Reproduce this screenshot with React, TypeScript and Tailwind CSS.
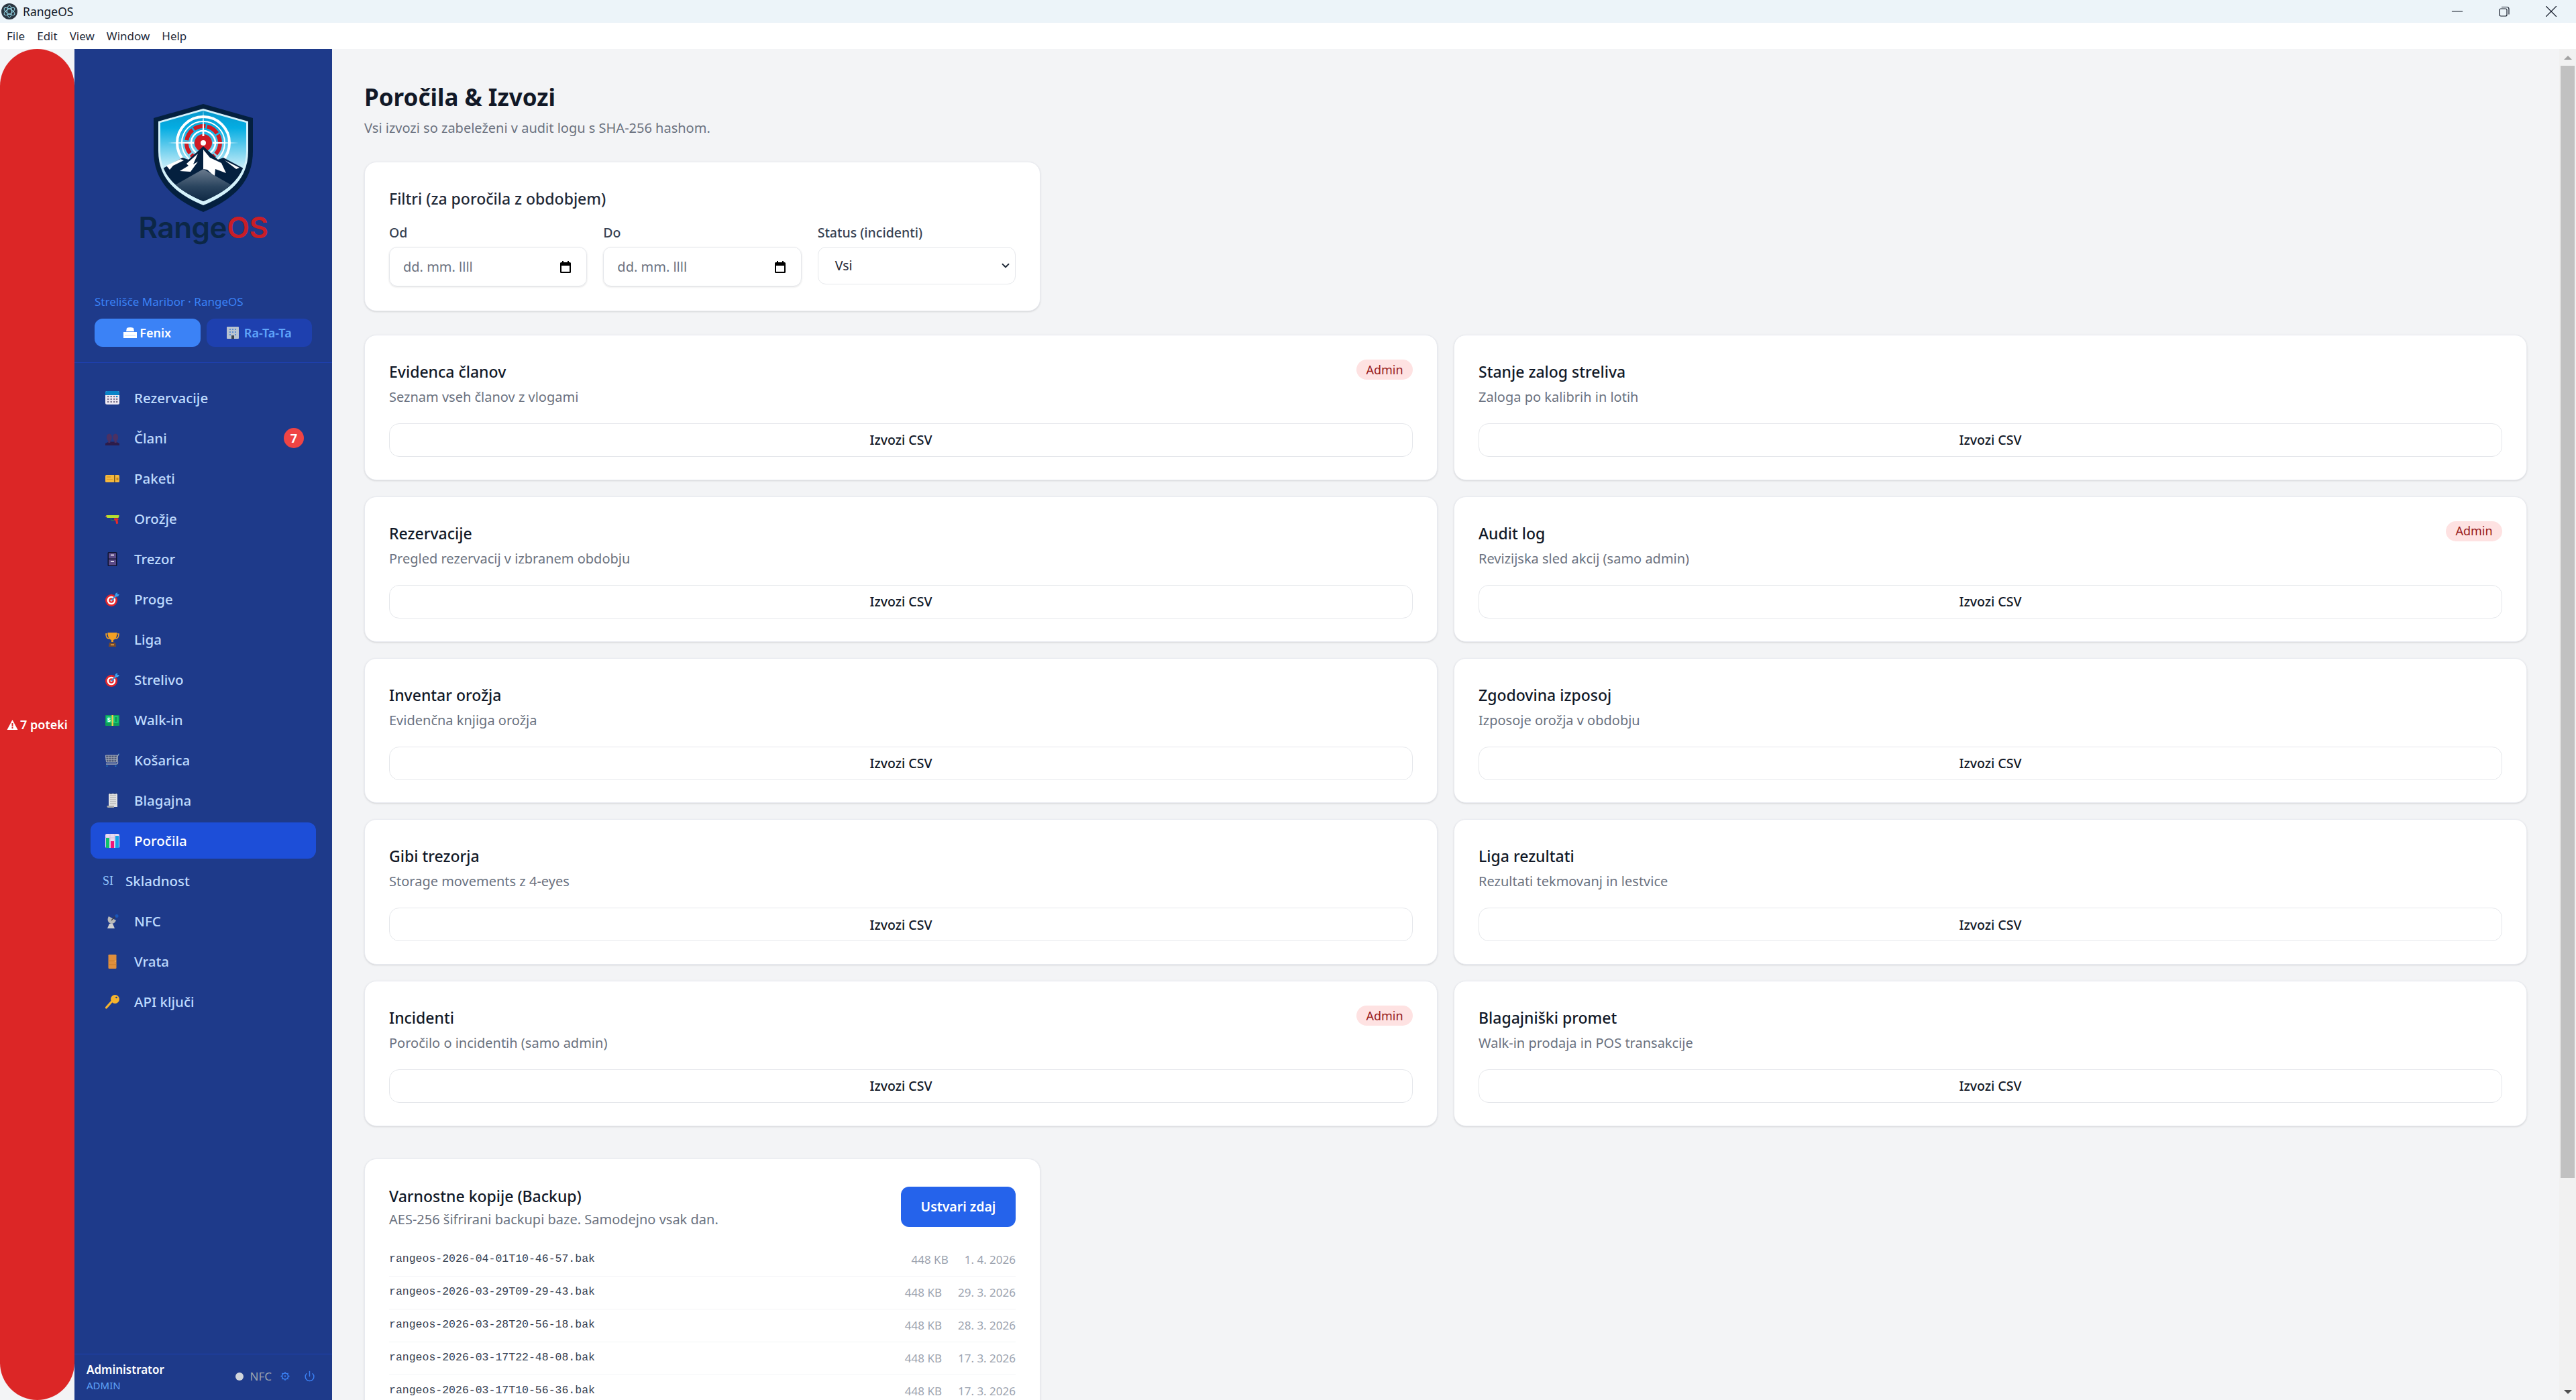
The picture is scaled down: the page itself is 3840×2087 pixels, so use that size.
import React from 'react';
import { Minus, X, ChevronDown, Power } from 'lucide-react';

const Cal = () => (
    <svg viewBox="0 0 21 21" className="w-[21px] h-[21px]">
        <rect x="0" y="0" width="21" height="20" rx="2.5" fill="#efeaf3" />
        <path d="M0 6V2.5A2.5 2.5 0 0 1 2.5 0h16A2.5 2.5 0 0 1 21 2.5V6z" fill="#0a84c8" />
        {[4, 8.5, 13, 17].map(x => [8, 12, 16].map(y => (
            <rect key={`${x}-${y}`} x={x - 1} y={y - 1} width="2.4" height="2.2" fill={x === 17 && y === 8 ? '#0a84c8' : '#7d7590'} />
        )))}
    </svg>
);
const Members = () => (
    <svg viewBox="0 0 21 21" className="w-[21px] h-[21px]">
        <path d="M0 21v-3l5-2.5h11l5 2.5v3z" fill="#2c1c4a" />
        <ellipse cx="5.8" cy="9" rx="4" ry="5.5" fill="#4b3163" />
        <ellipse cx="15.2" cy="9" rx="4" ry="5.5" fill="#4b3163" />
        <rect x="4.3" y="13" width="3" height="4" fill="#4b3163" />
        <rect x="13.7" y="13" width="3" height="4" fill="#4b3163" />
    </svg>
);
const Ticket = () => (
    <svg viewBox="0 0 21 21" className="w-[21px] h-[21px]">
        <rect x="0" y="5" width="21" height="11" rx="1.5" fill="#f5b83d" />
        <rect x="2" y="7.5" width="6" height="1" fill="#c98a1e" />
        <rect x="2" y="11" width="9" height="1" fill="#e09d2a" />
        <rect x="13" y="5" width="1.6" height="11" fill="#7a5a1d" />
        <rect x="16.5" y="9" width="3" height="4" fill="#c98a1e" />
    </svg>
);
const Pistol = () => (
    <svg viewBox="0 0 21 21" className="w-[21px] h-[21px]">
        <path d="M0 6.500l1.500-.8V5h19v2l-1 2H3z" fill="#b6e02e" />
        <path d="M0 6.500L2 5v3z" fill="#e2603c" />
        <path d="M13 9.500h6l.8 2-1.400.5 .8 5.500-3 .5-1-5-2-.5z" fill="#e52b2b" />
        <path d="M8 9.500l1 3h4" stroke="#2e8b3c" strokeWidth="1" fill="none" />
    </svg>
);
const Cabinet = () => (
    <svg viewBox="0 0 21 21" className="w-[21px] h-[21px]">
        <rect x="3.500" y="0" width="14" height="21" rx="1.500" fill="#0f1230" />
        <rect x="5" y="1.500" width="11" height="8" fill="#5b4a87" />
        <rect x="5" y="11" width="11" height="8.500" fill="#5b4a87" />
        <rect x="8" y="3.500" width="5" height="2" fill="#d8d2e6" />
        <rect x="8" y="13" width="5" height="2" fill="#d8d2e6" />
    </svg>
);
const Dart = () => (
    <svg viewBox="0 0 21 21" className="w-[21px] h-[21px]">
        <circle cx="9" cy="12" r="9" fill="#e5252b" />
        <circle cx="9" cy="12" r="6.300" fill="#fff" />
        <circle cx="9" cy="12" r="3.800" fill="#e5252b" />
        <circle cx="9" cy="12" r="1.500" fill="#fff" />
        <path d="M9 12l8-8" stroke="#2f8fd8" strokeWidth="2" />
        <path d="M14 7l1-5 3-2v3h3l-2 3-5 1z" fill="#3aa0ec" />
    </svg>
);
const Trophy = () => (
    <svg viewBox="0 0 21 21" className="w-[21px] h-[21px]">
        <path d="M3 2H1c0 5 2 7 5 7M18 2h2c0 5-2 7-5 7" stroke="#f2a024" strokeWidth="1.500" fill="none" />
        <path d="M3.500 0h14c0 6-2 10-5.500 11v3h-3v-3C5.500 10 3.500 6 3.500 0z" fill="#f2a024" />
        <path d="M5 21l1-6h9l1 6z" fill="#7a4a28" />
        <rect x="8" y="17.500" width="5" height="1.500" fill="#f2b04a" />
    </svg>
);
const Cash = () => (
    <svg viewBox="0 0 21 21" className="w-[21px] h-[21px]">
        <rect x="0" y="3" width="21" height="16" rx="1" fill="#0f9d58" />
        <rect x="1.500" y="4.500" width="18" height="10" fill="#19d27c" />
        <rect x="9.500" y="3" width="2.500" height="16" fill="#f2c94c" />
        <rect x="14" y="6" width="4" height="7" fill="#0f9d58" />
        <text x="2.800" y="13" fontSize="9" fontWeight="700" fill="#fff" fontFamily="'Liberation Sans',sans-serif">$</text>
    </svg>
);
const Cart = () => (
    <svg viewBox="0 0 21 21" className="w-[21px] h-[21px]" fill="none">
        <path d="M0.500 3h17l-1 10H1.500z" fill="#4f5a78" stroke="#aab0bd" />
        <path d="M0.500 6.500h17M0.500 9.500h16.500M5 3v10M9 3v10M13 3v10" stroke="#aab0bd" strokeWidth=".8" />
        <path d="M1 16h15c2 0 3-1 2.500-3L18 5l2-4" stroke="#a5acb8" strokeWidth="1.300" />
        <circle cx="2.500" cy="19" r="1" fill="#1f7cc4" />
        <circle cx="15.500" cy="19" r="1" fill="#1f7cc4" />
        <path d="M20 0l1 .5-.5 2-1-.5z" fill="#1f7cc4" />
    </svg>
);
const Receipt = () => (
    <svg viewBox="0 0 21 21" className="w-[21px] h-[21px]">
        <path d="M5 0h13v20H5z" fill="#e3e3e3" />
        <path d="M3 18h10v3H4a2 2 0 0 1-1-3z" fill="#a9a9a9" />
        <path d="M7 3h9M7 6h9M7 9h9M7 12h9M7 15h9" stroke="#a5a5a5" strokeWidth="1" />
        <path d="M5 .5h13" stroke="#666" strokeWidth="1" strokeDasharray="1 1" />
    </svg>
);
const Chart = () => (
    <svg viewBox="0 0 21 21" className="w-[21px] h-[21px]">
        <rect x="0" y="0" width="21" height="21" rx="2" fill="#e7daf0" />
        <path d="M7 0v21M14 0v21M0 6h21" stroke="#cdbbdc" strokeWidth=".8" />
        <rect x="1" y="6" width="5" height="15" fill="#0fc36b" />
        <rect x="8" y="11" width="5" height="10" fill="#f0147a" />
        <rect x="15" y="3" width="5" height="18" fill="#12a3e8" />
    </svg>
);
const Dish = () => (
    <svg viewBox="0 0 21 21" className="w-[21px] h-[21px]">
        <path d="M5 3c-3 5-1 10 4 11 3 0 6-2 7-5z" fill="#b9b9b9" />
        <path d="M9 9l6-6" stroke="#3f3f3f" strokeWidth="1.200" />
        <circle cx="17" cy="2.500" r="2.500" fill="#1a56b8" />
        <path d="M3 21l3-7h5l3 7z" fill="#d0d0d0" />
    </svg>
);
const Door = () => (
    <svg viewBox="0 0 21 21" className="w-[21px] h-[21px]">
        <rect x="4.500" y="0" width="12" height="21" rx="1.200" fill="#e08f3c" />
        <path d="M4.500 9.500h12M4.500 15h12" stroke="#c67a2b" strokeWidth="1" />
        <rect x="14" y="9" width="1.500" height="1.500" fill="#f7c56b" />
    </svg>
);
const KeyIcon = () => (
    <svg viewBox="0 0 21 21" className="w-[21px] h-[21px]">
        <path d="M1.500 19L10 9.500" stroke="#f7b42c" strokeWidth="3.200" strokeLinecap="round" />
        <circle cx="14.500" cy="6.500" r="6.500" fill="#f7b42c" />
        <circle cx="16.500" cy="4" r="1.300" fill="#1e3a8a" />
    </svg>
);

const navItems: { label: string; icon: React.ReactNode; badge?: string; active?: boolean }[] = [
    { label: 'Rezervacije', icon: <Cal /> },
    { label: 'Člani', icon: <Members />, badge: '7' },
    { label: 'Paketi', icon: <Ticket /> },
    { label: 'Orožje', icon: <Pistol /> },
    { label: 'Trezor', icon: <Cabinet /> },
    { label: 'Proge', icon: <Dart /> },
    { label: 'Liga', icon: <Trophy /> },
    { label: 'Strelivo', icon: <Dart /> },
    { label: 'Walk-in', icon: <Cash /> },
    { label: 'Košarica', icon: <Cart /> },
    { label: 'Blagajna', icon: <Receipt /> },
    { label: 'Poročila', icon: <Chart />, active: true },
    { label: 'Skladnost', icon: null },
    { label: 'NFC', icon: <Dish /> },
    { label: 'Vrata', icon: <Door /> },
    { label: 'API ključi', icon: <KeyIcon /> },
];

const reports: { title: string; desc: string; admin?: boolean }[] = [
    { title: 'Evidenca članov', desc: 'Seznam vseh članov z vlogami', admin: true },
    { title: 'Stanje zalog streliva', desc: 'Zaloga po kalibrih in lotih' },
    { title: 'Rezervacije', desc: 'Pregled rezervacij v izbranem obdobju' },
    { title: 'Audit log', desc: 'Revizijska sled akcij (samo admin)', admin: true },
    { title: 'Inventar orožja', desc: 'Evidenčna knjiga orožja' },
    { title: 'Zgodovina izposoj', desc: 'Izposoje orožja v obdobju' },
    { title: 'Gibi trezorja', desc: 'Storage movements z 4-eyes' },
    { title: 'Liga rezultati', desc: 'Rezultati tekmovanj in lestvice' },
    { title: 'Incidenti', desc: 'Poročilo o incidentih (samo admin)', admin: true },
    { title: 'Blagajniški promet', desc: 'Walk-in prodaja in POS transakcije' },
];

const backups = [
    ['rangeos-2026-04-01T10-46-57.bak', '1. 4. 2026'],
    ['rangeos-2026-03-29T09-29-43.bak', '29. 3. 2026'],
    ['rangeos-2026-03-28T20-56-18.bak', '28. 3. 2026'],
    ['rangeos-2026-03-17T22-48-08.bak', '17. 3. 2026'],
    ['rangeos-2026-03-17T10-56-36.bak', '17. 3. 2026'],
];

const Logo = () => (
    <svg viewBox="0 0 148 161" className="w-[148px] h-[161px]">
        <defs>
            <linearGradient id="sky" x1="0" y1="0" x2="0" y2="1">
                <stop offset="0" stopColor="#0b8fc4" />
                <stop offset="0.22" stopColor="#04ade2" />
                <stop offset="0.42" stopColor="#6fd0ee" />
                <stop offset="0.62" stopColor="#d8f2fa" />
            </linearGradient>
            <linearGradient id="rock" x1="0" y1="0" x2="0" y2="1">
                <stop offset="0" stopColor="#6a7b8e" />
                <stop offset="0.5" stopColor="#2a445e" />
                <stop offset="1" stopColor="#08223e" />
            </linearGradient>
            <clipPath id="inner">
                <path d="M74 10L138 28V70C138 103 118 127 74 145C30 127 10 103 10 70V28Z" />
            </clipPath>
        </defs>
        <path d="M74 0L148 21V70C148 112 124 140 74 161C24 140 0 112 0 70V21Z" fill="#04203f" />
        <path d="M74 7L141 26V70C141 107 120 132 74 151C28 132 7 107 7 70V26Z" fill="#d4f2fb" />
        <g clipPath="url(#inner)">
            <rect x="0" y="0" width="148" height="161" fill="url(#sky)" />
            <circle cx="74" cy="58" r="39" fill="none" stroke="#fff" strokeWidth="4" />
            <circle cx="74" cy="58" r="32" fill="none" stroke="#fff" strokeWidth="2" />
            <circle cx="74" cy="58" r="25" fill="none" stroke="#cf1b24" strokeWidth="6" strokeDasharray="18 2.500" />
            <circle cx="74" cy="58" r="13" fill="#cf1b24" />
            <circle cx="74" cy="58" r="18" fill="none" stroke="#fff" strokeWidth="2.500" />
            <circle cx="74" cy="58" r="4" fill="#fff" />
            <path d="M74 6L75.500 48H72.500Z M21 58L60 56.600V59.400Z M127 58L88 56.600V59.400Z" fill="#fff" />
            <path d="M14 96L43 80L52 83L74 63L96 83L104 80L134 96V150H14Z" fill="#04203f" />
            <path d="M74 68L84 80L101 88L108 103L92 97L91 108L80 98L74 97Z" fill="#fff" />
            <path d="M66 74L59 90L66 86L55 101L39 100L52 92L49 89Z M19 92L40 82L45 84L29 92L24 98Z M106 84L128 95L123 97Z" fill="#fff" />
            <path d="M30 122L74 97L118 122V150H30Z" fill="url(#rock)" />
        </g>
    </svg>
);

const Gear = () => (
    <svg viewBox="0 0 16 16" className="w-[14px] h-[15px]" fill="none" stroke="#3b82f6">
        <circle cx="8" cy="8" r="5.200" strokeWidth="1.800" />
        <circle cx="8" cy="8" r="1.300" fill="#3b82f6" stroke="none" />
        <path d="M8 .5v2M8 13.500v2M.5 8h2M13.500 8h2M2.700 2.700l1.400 1.400M11.900 11.900l1.400 1.400M13.300 2.700l-1.400 1.400M4.100 11.900l-1.400 1.400" strokeWidth="1.500" />
    </svg>
);

const CalendarGlyph = () => (
    <svg viewBox="0 0 16 18" className="w-[16px] h-[18px]">
        <path d="M3 0h2v2h6V0h2v2h1.500A1.500 1.500 0 0 1 16 3.500v13a1.500 1.500 0 0 1-1.500 1.500h-13A1.500 1.500 0 0 1 0 16.500v-13A1.500 1.500 0 0 1 1.500 2H3zM2 7v9h12V7z" fill="#000" />
    </svg>
);

const DateField = ({ label }: { label: string }) => (
    <div>
        <label className="block text-[19.5px] leading-[30px] font-medium text-[#374151] mb-[6px]">{label}</label>
        <div className="h-[59px] pl-[20px] pr-[23px] rounded-[12px] border border-[#e5e7eb] shadow-sm flex items-center justify-between">
            <span className="text-[20px] text-[#6b7280]">dd. mm. llll</span>
            <CalendarGlyph />
        </div>
    </div>
);

const ReportCard = ({ title, desc, admin }: { title: string; desc: string; admin?: boolean }) => (
    <div className="bg-white rounded-[18px] border border-[#e8eaf0] shadow-sm p-[36px] h-[216.75px]">
        <div className="flex items-start justify-between h-[95px]">
            <div>
                <h3 className="text-[23px] leading-[36px] font-medium text-[#111827]">{title}</h3>
                <p className="mt-[4px] text-[20px] leading-[32px] text-[#6b7280]">{desc}</p>
            </div>
            {admin && (
                <span className="h-[30px] w-[84px] flex items-center justify-center rounded-full bg-[#fee2e2] text-[#991b1b] text-[18px]">Admin</span>
            )}
        </div>
        <button className="w-full h-[50px] rounded-[15px] border border-[#e5e7eb] text-[19.5px] font-medium text-[#111827]">Izvozi CSV</button>
    </div>
);

export default function App() {
    return (
        <div className="h-[2087px] flex flex-col overflow-hidden bg-[#f3f4f6] font-['Noto_Sans',sans-serif]">
            {/* window chrome */}
            <div className="h-[34px] shrink-0 bg-[#ecf4f9] flex items-center justify-between">
                <div className="flex items-center gap-[8px] pl-[2px]">
                    <svg viewBox="0 0 24 24" className="w-[24px] h-[24px]" fill="none">
                        <circle cx="12" cy="12" r="12" fill="#2b3540" />
                        <g stroke="#9feaf9" strokeWidth=".9">
                            <ellipse cx="12" cy="12" rx="9" ry="3.500" transform="rotate(30 12 12)" />
                            <ellipse cx="12" cy="12" rx="9" ry="3.500" transform="rotate(90 12 12)" />
                            <ellipse cx="12" cy="12" rx="9" ry="3.500" transform="rotate(150 12 12)" />
                        </g>
                    </svg>
                    <span className="text-[17.5px] text-[#111827]">RangeOS</span>
                </div>
                <div className="flex items-center pr-[2px] text-[#111827]">
                    <div className="w-[70px] flex justify-center"><Minus size={26} strokeWidth={1.1} /></div>
                    <div className="w-[70px] flex justify-center">
                        <svg viewBox="0 0 16 16" className="w-[16px] h-[16px]" fill="none" stroke="currentColor" strokeWidth="1.200">
                            <rect x="1" y="4" width="11" height="11" rx="2" />
                            <path d="M4 1.500h8A3 3 0 0 1 15 4.500v8" />
                        </svg>
                    </div>
                    <div className="w-[70px] flex justify-center"><X size={30} strokeWidth={0.9} /></div>
                </div>
            </div>
            <div className="h-[39px] shrink-0 bg-white flex items-center gap-[18px] pl-[10px] text-[17px] text-[#1f2937]">
                <span>File</span><span>Edit</span><span>View</span><span>Window</span><span>Help</span>
            </div>

            <div className="flex-1 flex min-h-0">
                {/* expiry strip */}
                <div className="w-[111px] shrink-0 rounded-full bg-[#dc2626] flex items-center justify-center gap-[3px] text-white text-[18px] font-semibold">
                    <svg viewBox="0 0 16 15" className="w-[17px] h-[15px]">
                        <path d="M8 0l8 15H0zM7 5v5h2V5zm0 6v2h2v-2z" fill="#fff" fillRule="evenodd" />
                    </svg>
                    <span>7 poteki</span>
                </div>

                {/* sidebar */}
                <aside className="w-[384px] shrink-0 bg-[#1e3a8a] flex flex-col">
                    <div className="h-[468px] shrink-0 border-b border-[#1e40af] px-[30px] pt-[82px] flex flex-col">
                        <div className="flex flex-col items-center">
                            <Logo />
                            <div className="h-[46px] text-[44px] leading-[46px] font-semibold font-['Inter',sans-serif] tracking-[-0.5px]">
                                <span className="text-[#0c2746]">Range</span><span className="text-[#c81e28]">OS</span>
                            </div>
                        </div>
                        <p className="mt-[76px] text-[17px] leading-[24px] text-[#3b82f6]">Strelišče Maribor · RangeOS</p>
                        <div className="mt-[13px] flex gap-[9px]">
                            <button className="flex-1 h-[42px] rounded-[12px] bg-[#3b82f6] text-white text-[18px] font-semibold flex items-center justify-center gap-[4px]">
                                <svg viewBox="0 0 20 16" className="w-[20px] h-[16px]">
                                    <path d="M5 1c3-1.300 7-1.300 10 0l1 5H4z M0 7h20v9H0z" fill="#fff" />
                                    <path d="M2 12h16" stroke="#bfdbfe" strokeWidth="1" />
                                </svg>
                                Fenix
                            </button>
                            <button className="flex-1 h-[42px] rounded-[12px] bg-[#1e40af] text-[#60a5fa] text-[18px] font-semibold flex items-center justify-center gap-[8px]">
                                <svg viewBox="0 0 18 18" className="w-[18px] h-[18px]">
                                    <rect x="0" y="0" width="18" height="18" rx="1" fill="#b9c3cf" />
                                    <path d="M4 3h2v2H4zM8 3h2v2H8zM12 3h2v2h-2zM4 7h2v2H4zM8 7h2v2H8zM12 7h2v2h-2zM4 11h2v2H4zM12 11h2v2h-2z" fill="#5b8fd6" />
                                    <rect x="7" y="13" width="4" height="5" fill="#3c4450" />
                                </svg>
                                Ra-Ta-Ta
                            </button>
                        </div>
                    </div>

                    <nav className="flex-1 px-[24px] pt-[25px] pb-[23px] flex flex-col gap-[6px]">
                        {navItems.map(item => (
                            <div
                                key={item.label}
                                className={`h-[54px] rounded-[12px] px-[18px] flex items-center gap-[18px] text-[20.5px] font-medium ${item.active ? 'bg-[#1d4ed8] text-white' : 'text-[#bfdbfe]'}`}
                            >
                                {item.icon ? (
                                    <span className="w-[29px] flex justify-center">{item.icon}</span>
                                ) : (
                                    <span className="w-[16px] text-[18px] font-['Liberation_Serif',serif] text-[#93c5fd]">SI</span>
                                )}
                                <span className="flex-1">{item.label}</span>
                                {item.badge && (
                                    <span className="w-[30px] h-[30px] rounded-full bg-[#ef4444] text-white text-[18px] font-bold flex items-center justify-center">{item.badge}</span>
                                )}
                            </div>
                        ))}
                    </nav>

                    <div className="h-[69px] shrink-0 border-t border-[#1e40af] px-[18px] pb-[3px] flex items-center justify-between">
                        <div>
                            <div className="text-[17px] leading-[26px] font-semibold text-white">Administrator</div>
                            <div className="text-[15px] leading-[20px] text-[#60a5fa]">ADMIN</div>
                        </div>
                        <div className="flex items-center">
                            <span className="w-[12px] h-[12px] rounded-full bg-[#d1d5db]" />
                            <span className="ml-[10px] text-[17px] text-[#9ca3af]">NFC</span>
                            <span className="ml-[13px]"><Gear /></span>
                            <Power size={17} className="ml-[21px] mr-[7px] text-[#3b82f6]" />
                        </div>
                    </div>
                </aside>

                {/* content */}
                <main className="flex-1 min-w-0 overflow-hidden p-[48px]">
                    <h1 className="text-[35px] leading-[48px] font-bold text-[#111827]">Poročila &amp; Izvozi</h1>
                    <p className="mt-[6px] text-[20px] leading-[31px] text-[#6b7280]">Vsi izvozi so zabeleženi v audit logu s SHA-256 hashom.</p>

                    <section className="mt-[35px] w-[1008px] bg-white rounded-[18px] border border-[#e8eaf0] shadow-sm p-[36px]">
                        <h2 className="text-[23px] leading-[36px] font-medium text-[#1f2937] mb-[18px]">Filtri (za poročila z obdobjem)</h2>
                        <div className="grid grid-cols-3 gap-[24px] items-start">
                            <DateField label="Od" />
                            <DateField label="Do" />
                            <div>
                                <label className="block text-[19.5px] leading-[30px] font-medium text-[#374151] mb-[6px]">Status (incidenti)</label>
                                <div className="h-[56px] pl-[25px] pr-[5px] rounded-[12px] border border-[#e5e7eb] flex items-center justify-between">
                                    <span className="text-[19.5px] text-[#1f2937]">Vsi</span>
                                    <ChevronDown size={18} strokeWidth={2.5} className="text-[#1f2937]" />
                                </div>
                            </div>
                        </div>
                    </section>

                    <div className="mt-[35px] grid grid-cols-2 gap-[24px]">
                        {reports.map(r => <ReportCard key={r.title} {...r} />)}
                    </div>

                    <section className="mt-[48px] w-[1008px] bg-white rounded-[18px] border border-[#e8eaf0] shadow-sm p-[36px]">
                        <div className="flex items-center justify-between mb-[20px]">
                            <div>
                                <h2 className="text-[23px] leading-[38px] font-medium text-[#111827]">Varnostne kopije (Backup)</h2>
                                <p className="text-[20px] leading-[32px] text-[#6b7280]">AES-256 šifrirani backupi baze. Samodejno vsak dan.</p>
                            </div>
                            <button className="w-[171px] h-[60px] rounded-[12px] bg-[#2563eb] text-white text-[19.5px] font-semibold">Ustvari zdaj</button>
                        </div>
                        {backups.map(([name, date]) => (
                            <div key={name} className="h-[49px] flex items-center justify-between border-b border-[#f3f4f6]">
                                <span className="font-['Liberation_Mono',monospace] text-[16.5px] text-[#374151]">{name}</span>
                                <span className="flex gap-[24px] text-[17px] text-[#9ca3af]">
                                    <span>448 KB</span>
                                    <span>{date}</span>
                                </span>
                            </div>
                        ))}
                    </section>
                </main>

                {/* scrollbar */}
                <div className="w-[25px] shrink-0 bg-[#f1f1f1] flex flex-col items-center">
                    <div className="h-[25px] flex items-center justify-center">
                        <div className="w-0 h-0 border-x-[6px] border-x-transparent border-b-[6px] border-b-[#a3a3a3]" />
                    </div>
                    <div className="w-[21px] h-[1658px] bg-[#c1c1c1]" />
                    <div className="flex-1" />
                    <div className="h-[25px] flex items-center justify-center">
                        <div className="w-0 h-0 border-x-[6px] border-x-transparent border-t-[6px] border-t-[#505050]" />
                    </div>
                </div>
            </div>
        </div>
    );
}
